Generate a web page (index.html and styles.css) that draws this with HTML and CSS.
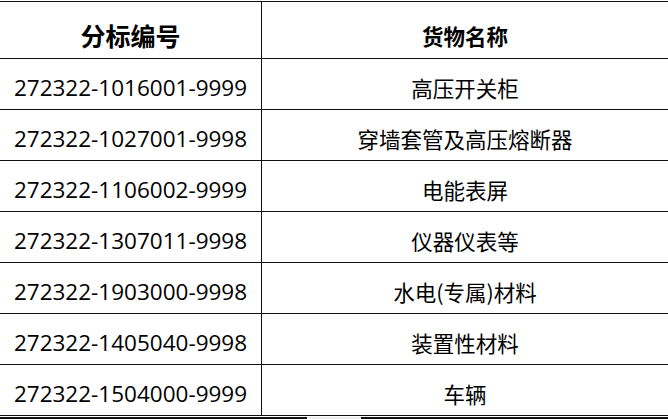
FILE: index.html
```html
<!DOCTYPE html>
<html lang="zh">
<head>
<meta charset="utf-8">
<title>分标编号</title>
<link rel="stylesheet" href="styles.css">
</head>
<body>
<div class="sheet">
  <div class="row head">
    <div class="cell code">分标编号</div>
    <div class="cell name">货物名称</div>
  </div>
  <div class="row">
    <div class="cell code">272322-1016001-9999</div>
    <div class="cell name">高压开关柜</div>
  </div>
  <div class="row">
    <div class="cell code">272322-1027001-9998</div>
    <div class="cell name">穿墙套管及高压熔断器</div>
  </div>
  <div class="row">
    <div class="cell code">272322-1106002-9999</div>
    <div class="cell name">电能表屏</div>
  </div>
  <div class="row">
    <div class="cell code">272322-1307011-9998</div>
    <div class="cell name">仪器仪表等</div>
  </div>
  <div class="row">
    <div class="cell code">272322-1903000-9998</div>
    <div class="cell name">水电(专属)材料</div>
  </div>
  <div class="row">
    <div class="cell code">272322-1405040-9998</div>
    <div class="cell name">装置性材料</div>
  </div>
  <div class="row">
    <div class="cell code">272322-1504000-9999</div>
    <div class="cell name">车辆</div>
  </div>
  <div class="bottom-rule">
    <div class="seg dark a"></div>
    <div class="seg light"></div>
    <div class="seg dark b"></div>
  </div>
</div>
</body>
</html>
```

FILE: styles.css
```css
html, body {
  margin: 0;
  padding: 0;
  background: #ffffff;
}
.sheet {
  width: 668px;
  padding-top: 1px;
  font-family: "Open Sans", "Noto Sans CJK SC", sans-serif;
  color: #000;
}
.row {
  display: grid;
  grid-template-columns: 262px 1fr;
  height: 50px;
  border-bottom: 1px solid #111;
}
.row.head {
  height: 56px;
  border-top: 1px solid #111;
}
.cell {
  display: flex;
  align-items: center;
  justify-content: center;
  font-size: 22.5px;
  line-height: 1;
  padding-top: 8px;
  box-sizing: border-box;
  white-space: nowrap;
}
.cell.code {
  border-right: 1px solid #111;
}
.head .cell {
  font-family: "Noto Sans CJK SC", sans-serif;
  font-weight: 700;
  font-size: 25px;
  padding-top: 11px;
}
.cell.name {
  font-family: "Noto Sans CJK SC", sans-serif;
  font-size: 21.5px;
}
.bottom-rule {
  display: flex;
  margin-top: 1px;
  height: 2px;
}
.seg.dark { background: #111; }
.seg.a { width: 307px; }
.seg.light { width: 54px; background: #ececec; }
.seg.b { flex: 1; }
```
